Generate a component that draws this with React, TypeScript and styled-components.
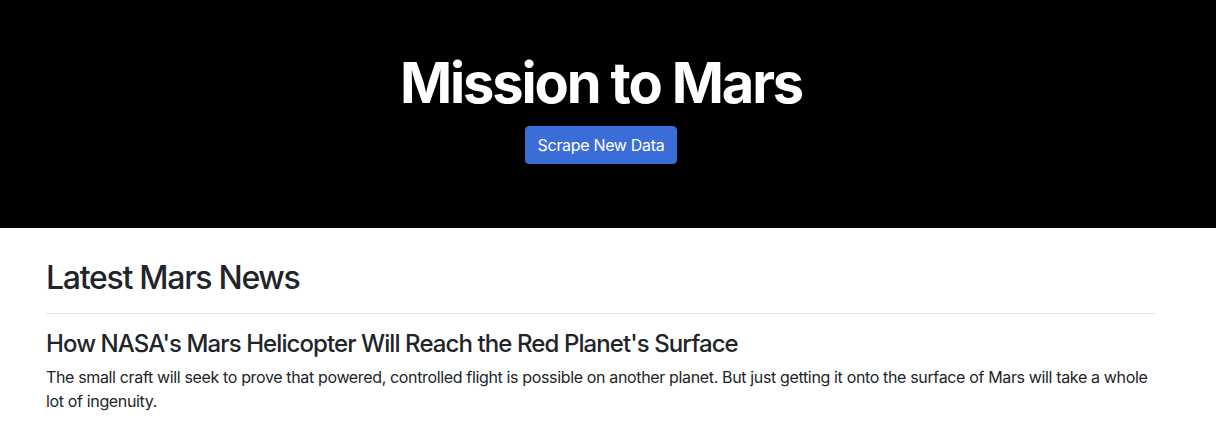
import React from "react";
import styled, { createGlobalStyle } from "styled-components";

const Global = createGlobalStyle`
  html, body { margin: 0; padding: 0; background: #fff; }
  body {
    font-family: Inter, "Noto Sans", "Liberation Sans", sans-serif;
    color: #212529;
    font-size: 16px;
    line-height: 1.5;
  }
  * { box-sizing: border-box; }
`;

const Page = styled.div`
  width: 100%;
`;

const Jumbotron = styled.header`
  background: #000;
  color: #fff;
  padding: 53px 14px 64px 0;
  display: flex;
  flex-direction: column;
  align-items: center;
  margin-bottom: 31px;
`;

const Title = styled.h1`
  margin: 0 0 11px;
  font-size: 56px;
  font-weight: 700;
  line-height: 1.1;
  letter-spacing: -0.038em;
`;

const Button = styled.button`
  height: 38px;
  padding: 0 12px;
  border: 1px solid #3b6dd9;
  border-radius: 4px;
  background: #3b6dd9;
  color: #fff;
  font-family: inherit;
  font-size: 16px;
  line-height: 1.5;
  letter-spacing: -0.02em;
  cursor: pointer;
`;

const Wrap = styled.div`
  padding-right: 14px;
`;

const Container = styled.main`
  max-width: 1140px;
  margin: 0 auto;
  padding: 0 15px;
`;

const SectionTitle = styled.h2`
  margin: 0;
  font-size: 32px;
  font-weight: 500;
  line-height: 1.2;
  letter-spacing: -0.04em;
`;

const Rule = styled.hr`
  border: 0;
  border-top: 1px solid rgba(0, 0, 0, 0.1);
  margin: 16px 0;
`;

const ArticleTitle = styled.h3`
  margin: 0 0 6px;
  font-size: 24px;
  font-weight: 500;
  line-height: 1.2;
  letter-spacing: -0.038em;
`;

const Teaser = styled.p`
  margin: 0 0 16px;
  font-size: 16px;
  line-height: 1.5;
  letter-spacing: -0.022em;
`;

export default function App() {
  return (
    <Page>
      <Global />
      <Jumbotron>
        <Title>Mission to Mars</Title>
        <Button>Scrape New Data</Button>
      </Jumbotron>
      <Wrap>
        <Container>
          <SectionTitle>Latest Mars News</SectionTitle>
          <Rule />
          <ArticleTitle>How NASA's Mars Helicopter Will Reach the Red Planet's Surface</ArticleTitle>
          <Teaser>
            The small craft will seek to prove that powered, controlled flight is possible on another planet. But
            just getting it onto the surface of Mars will take a whole lot of ingenuity.
          </Teaser>
        </Container>
      </Wrap>
    </Page>
  );
}
